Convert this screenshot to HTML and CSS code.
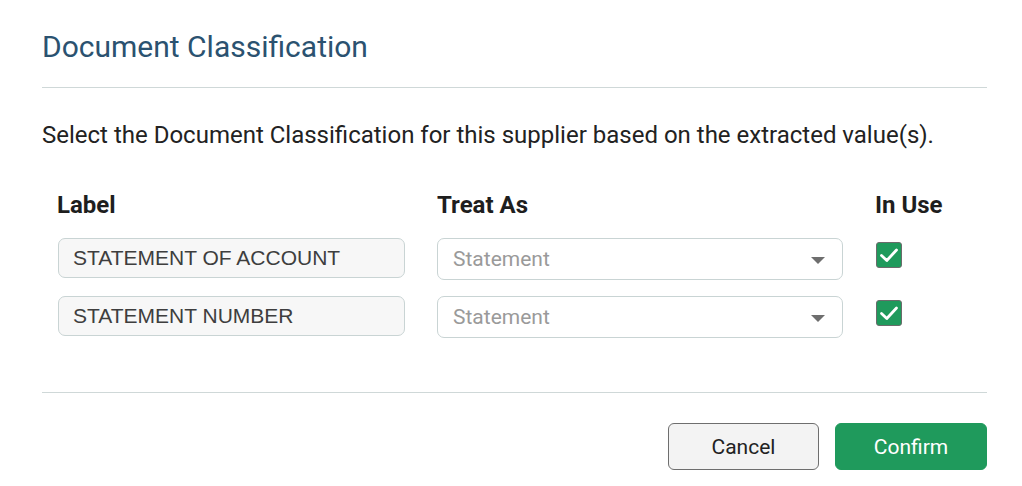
FILE: index.html
```html
<!DOCTYPE html>
<html>
<head>
<meta charset="utf-8">
<link rel="stylesheet" href="styles.css">
</head>
<body>
<div class="dialog">
  <h1 class="title">Document Classification</h1>
  <div class="body">
    <p class="intro">Select the Document Classification for this supplier based on the extracted value(s).</p>
    <div class="grid">
      <div class="head">Label</div>
      <div class="head">Treat As</div>
      <div class="head">In Use</div>

      <div class="input">STATEMENT OF ACCOUNT</div>
      <div class="select"><span>Statement</span><span class="caret"></span></div>
      <div class="check"><svg viewBox="0 0 24 24" width="24" height="24"><path d="M4.5 12.5 L9.8 17.5 L19.5 7" fill="none" stroke="#fff" stroke-width="2.8" stroke-linecap="round" stroke-linejoin="round"/></svg></div>

      <div class="input">STATEMENT NUMBER</div>
      <div class="select"><span>Statement</span><span class="caret"></span></div>
      <div class="check"><svg viewBox="0 0 24 24" width="24" height="24"><path d="M4.5 12.5 L9.8 17.5 L19.5 7" fill="none" stroke="#fff" stroke-width="2.8" stroke-linecap="round" stroke-linejoin="round"/></svg></div>
    </div>
  </div>
  <div class="footer">
    <button class="btn cancel">Cancel</button>
    <button class="btn confirm">Confirm</button>
  </div>
</div>
</body>
</html>
```
FILE: styles.css
```css
html, body {
  margin: 0;
  padding: 0;
  background: #fff;
}
body {
  font-family: Roboto, "Liberation Sans", sans-serif;
  color: #222;
}
.dialog {
  width: 945px;
  margin-left: 42px;
}
.title {
  margin: 0;
  padding-top: 29px;
  padding-bottom: 22px;
  font-size: 30px;
  font-weight: 400;
  line-height: 36px;
  color: #2b5270;
  border-bottom: 1px solid #cfd8d8;
}
.body {
  padding-bottom: 54px;
  border-bottom: 1px solid #cfd8d8;
}
.intro {
  margin: 0;
  padding-top: 31px;
  font-size: 24px;
  line-height: 32px;
  color: #222;
}
.grid {
  display: grid;
  grid-template-columns: 347px 406px auto;
  column-gap: 32px;
  row-gap: 16px;
  padding-left: 16px;
  margin-top: 40px;
  align-items: start;
}
.head {
  font-weight: 700;
  font-size: 24px;
  line-height: 28px;
  color: #1e1e1e;
  margin-bottom: 3px;
}
.head:first-child {
  margin-left: -1px;
}
.input {
  height: 40px;
  box-sizing: border-box;
  border: 1px solid #c9d4d4;
  border-radius: 7px;
  background: #f7f7f7;
  padding: 0 14px;
  font-family: "Liberation Sans", Arial, sans-serif;
  font-size: 21px;
  line-height: 38px;
  color: #3e3e3e;
}
.select {
  height: 42px;
  box-sizing: border-box;
  border: 1px solid #c9d4d4;
  border-radius: 7px;
  background: #fff;
  padding: 0 17px 0 15px;
  display: flex;
  align-items: center;
  justify-content: space-between;
  font-size: 21px;
  color: #9a9a9a;
}
.caret {
  width: 0;
  height: 0;
  border-left: 7px solid transparent;
  border-right: 7px solid transparent;
  border-top: 7px solid #6e6e6e;
  margin-top: 2px;
}
.check {
  width: 26px;
  height: 26px;
  box-sizing: border-box;
  margin-top: 4px;
  margin-left: 1px;
  border: 1px solid #6b6b6b;
  border-radius: 3px;
  background: #1f9a5c;
  display: flex;
  align-items: center;
  justify-content: center;
}
.check svg {
  display: block;
  width: 24px;
  height: 24px;
}
.footer {
  display: flex;
  justify-content: flex-end;
  gap: 16px;
  padding-top: 30px;
}
.btn {
  height: 47px;
  width: 152px;
  box-sizing: border-box;
  border-radius: 6px;
  font-family: Roboto, "Liberation Sans", sans-serif;
  font-size: 21px;
  cursor: pointer;
}
.cancel {
  width: 151px;
  background: #f3f3f3;
  border: 1px solid #6e6e6e;
  color: #222;
}
.confirm {
  background: #1f9a5c;
  border: 1px solid #1f9a5c;
  color: #fff;
}
```
